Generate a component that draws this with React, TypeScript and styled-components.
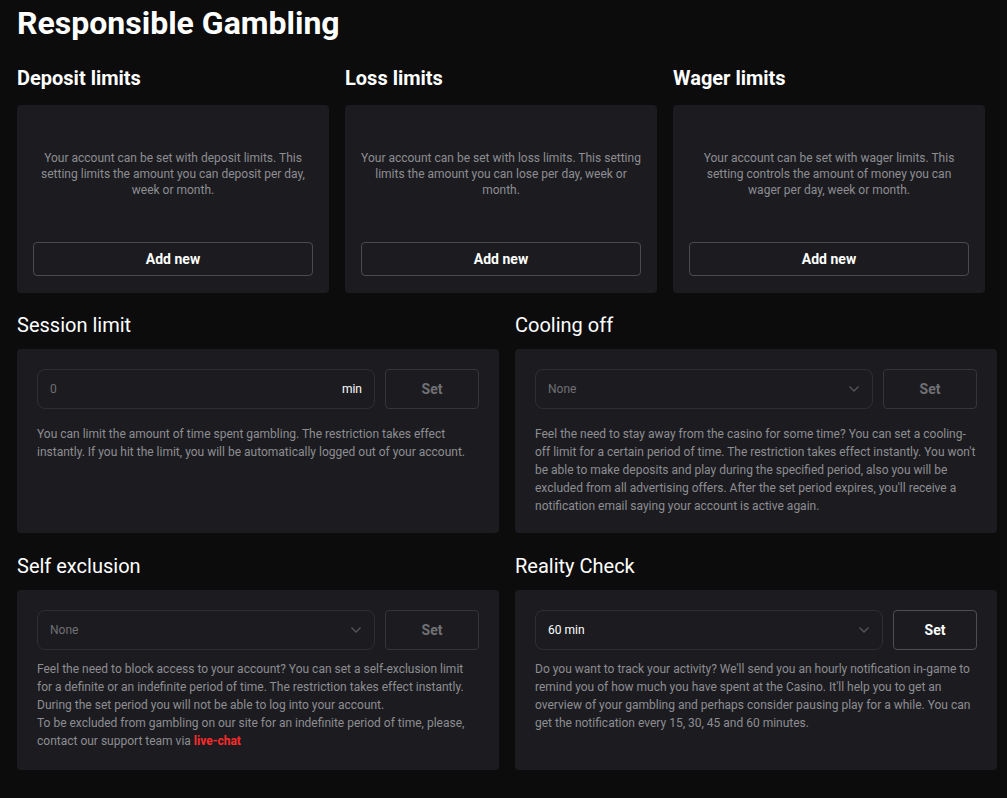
import React from "react";
import styled, { createGlobalStyle } from "styled-components";

const GlobalStyle = createGlobalStyle`
  html, body {
    margin: 0;
    padding: 0;
    background: #0c0c0d;
  }
  body {
    font-family: Roboto, "Liberation Sans", sans-serif;
    color: #fff;
  }
  * {
    box-sizing: border-box;
  }
`;

const Page = styled.div`
  padding: 4px 10px 28px 17px;
  background: #0c0c0d;
  min-height: 798px;
`;

const Title = styled.h1`
  margin: 0 0 24px;
  font-size: 32px;
  line-height: 38px;
  font-weight: 700;
  color: #fff;
`;

const LimitsRow = styled.div`
  display: grid;
  grid-template-columns: repeat(3, 312px);
  column-gap: 16px;
  margin-bottom: 20px;
`;

const SettingsGrid = styled.div`
  display: grid;
  grid-template-columns: repeat(2, 482px);
  column-gap: 16px;
  row-gap: 21px;
`;

const Section = styled.section`
  display: flex;
  flex-direction: column;
`;

const Heading = styled.h2<{ $bold?: boolean }>`
  margin: 0 0 ${(p) => (p.$bold ? "15px" : "12px")};
  font-size: 20px;
  line-height: 24px;
  font-weight: ${(p) => (p.$bold ? 700 : 400)};
  color: #fff;
`;

const Card = styled.div<{ $pad: string }>`
  flex: 1;
  display: flex;
  flex-direction: column;
  background: #1c1c20;
  border-radius: 4px;
  padding: ${(p) => p.$pad};
`;

const LimitText = styled.div`
  height: 106px;
  display: flex;
  align-items: center;
  justify-content: center;
  margin-bottom: 15px;
  text-align: center;
  font-size: 12px;
  line-height: 16px;
  color: #8d8d92;
`;

const OutlineButton = styled.button`
  height: 34px;
  width: 100%;
  background: transparent;
  border: 1px solid #4a4a4f;
  border-radius: 4px;
  color: #fff;
  font-family: inherit;
  font-size: 14px;
  font-weight: 700;
  cursor: pointer;
`;

const Controls = styled.div<{ $gap: number }>`
  display: flex;
  gap: 10px;
  margin-bottom: ${(p) => p.$gap}px;
`;

const Field = styled.div`
  flex: 1;
  height: 40px;
  display: flex;
  align-items: center;
  justify-content: space-between;
  padding: 0 12px;
  border: 1px solid #2e2e33;
  border-radius: 8px;
  font-size: 12px;
`;

const FieldValue = styled.span<{ $active?: boolean }>`
  color: ${(p) => (p.$active ? "#fff" : "#6f6f74")};
`;

const Unit = styled.span`
  color: #fff;
`;

const SetButton = styled.button<{ $active?: boolean }>`
  width: ${(p) => (p.$active ? "84px" : "94px")};
  height: 40px;
  background: transparent;
  border: 1px solid ${(p) => (p.$active ? "#4d4d52" : "#34343a")};
  border-radius: 4px;
  color: ${(p) => (p.$active ? "#fff" : "#707075")};
  font-family: inherit;
  font-size: 14px;
  font-weight: 700;
`;

const Description = styled.p`
  margin: 0;
  font-size: 12px;
  line-height: 18px;
  color: #8d8d92;
`;

const ChatLink = styled.a`
  color: #ff2b2b;
  font-weight: 700;
  text-decoration: none;
`;

const Chevron = () => (
  <svg width="12" height="8" viewBox="0 0 12 8" fill="none">
    <polyline points="1.5,1.5 6,6 10.5,1.5" stroke="#55555a" strokeWidth="1.3" />
  </svg>
);

const limits = [
  {
    title: "Deposit limits",
    text: "Your account can be set with deposit limits. This setting limits the amount you can deposit per day, week or month.",
  },
  {
    title: "Loss limits",
    text: "Your account can be set with loss limits. This setting limits the amount you can lose per day, week or month.",
  },
  {
    title: "Wager limits",
    text: "Your account can be set with wager limits. This setting controls the amount of money you can wager per day, week or month.",
  },
];

const Select = ({ value, active }: { value: string; active?: boolean }) => (
  <Field>
    <FieldValue $active={active}>{value}</FieldValue>
    <Chevron />
  </Field>
);

const App: React.FC = () => (
  <>
    <GlobalStyle />
    <Page>
      <Title>Responsible Gambling</Title>

      <LimitsRow>
        {limits.map((l) => (
          <Section key={l.title}>
            <Heading $bold>{l.title}</Heading>
            <Card $pad="16px 16px 17px">
              <LimitText>{l.text}</LimitText>
              <OutlineButton>Add new</OutlineButton>
            </Card>
          </Section>
        ))}
      </LimitsRow>

      <SettingsGrid>
        <Section>
          <Heading>Session limit</Heading>
          <Card $pad="20px 20px 18px">
            <Controls $gap={16}>
              <Field>
                <FieldValue>0</FieldValue>
                <Unit>min</Unit>
              </Field>
              <SetButton>Set</SetButton>
            </Controls>
            <Description>
              You can limit the amount of time spent gambling. The restriction takes effect
              instantly. If you hit the limit, you will be automatically logged out of your account.
            </Description>
          </Card>
        </Section>

        <Section>
          <Heading>Cooling off</Heading>
          <Card $pad="20px 20px 18px">
            <Controls $gap={16}>
              <Select value="None" />
              <SetButton>Set</SetButton>
            </Controls>
            <Description>
              Feel the need to stay away from the casino for some time? You can set a cooling-off
              limit for a certain period of time. The restriction takes effect instantly. You won't
              be able to make deposits and play during the specified period, also you will be
              excluded from all advertising offers. After the set period expires, you'll receive a
              notification email saying your account is active again.
            </Description>
          </Card>
        </Section>

        <Section>
          <Heading>Self exclusion</Heading>
          <Card $pad="20px">
            <Controls $gap={10}>
              <Select value="None" />
              <SetButton>Set</SetButton>
            </Controls>
            <Description>
              Feel the need to block access to your account? You can set a self-exclusion limit for
              a definite or an indefinite period of time. The restriction takes effect instantly.
              During the set period you will not be able to log into your account.
              <br />
              To be excluded from gambling on our site for an indefinite period of time, please,
              contact our support team via <ChatLink href="#live-chat">live-chat</ChatLink>
            </Description>
          </Card>
        </Section>

        <Section>
          <Heading>Reality Check</Heading>
          <Card $pad="20px">
            <Controls $gap={10}>
              <Select value="60 min" active />
              <SetButton $active>Set</SetButton>
            </Controls>
            <Description>
              Do you want to track your activity? We'll send you an hourly notification in-game to
              remind you of how much you have spent at the Casino. It'll help you to get an
              overview of your gambling and perhaps consider pausing play for a while. You can get
              the notification every 15, 30, 45 and 60 minutes.
            </Description>
          </Card>
        </Section>
      </SettingsGrid>
    </Page>
  </>
);

export default App;
